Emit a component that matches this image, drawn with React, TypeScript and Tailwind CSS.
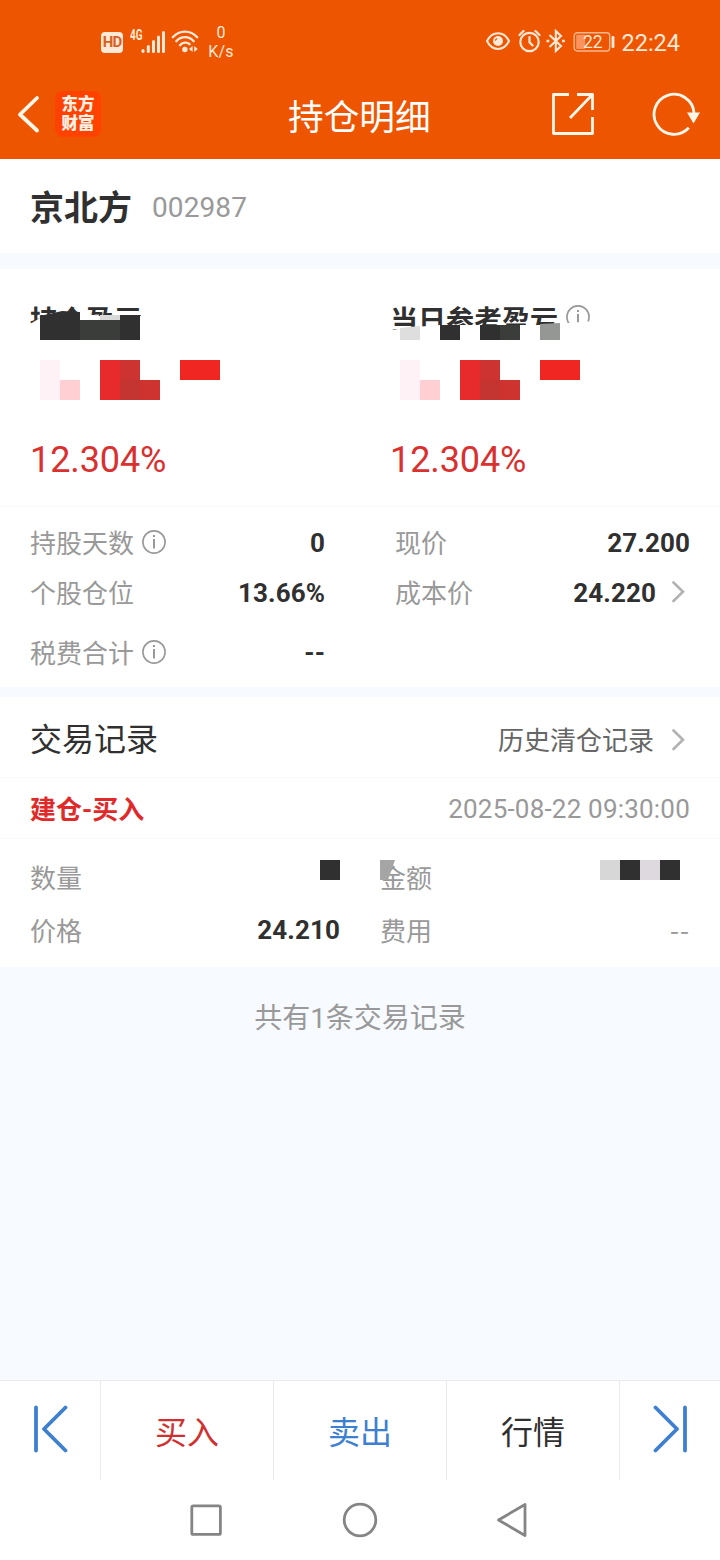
import React from 'react';
import clsx from 'clsx';

interface InfoIconProps {
  className?: string;
}

const InfoIcon: React.FC<InfoIconProps> = ({ className }) => (
  <svg viewBox="0 0 24 24" className={clsx('h-6 w-6 shrink-0', className)} fill="none" stroke="#999" strokeWidth="1.6">
    <circle cx="12" cy="12" r="11.1" />
    <path d="M12 9v9.5" strokeWidth="2" />
    <path d="M12 5v2" strokeWidth="2" />
  </svg>
);

const ChevronIcon: React.FC = () => (
  <svg viewBox="0 0 14 22" className="h-[22px] w-[14px] shrink-0" fill="none" stroke="#b3b1b3" strokeWidth="2.6" strokeLinecap="round">
    <path d="M2.5 1.5l9.5 9.2L2.5 20" />
  </svg>
);

const StatusBar: React.FC = () => (
  <div className="flex h-[70px] items-center justify-between pl-[101px] pr-10 pt-[13px] text-[#ffe9d6]">
    <div className="flex items-center">
      <div className="mt-px flex h-[21px] w-[22px] items-center justify-center rounded-[4px] bg-[#ffe9d6] text-[15px] font-bold tracking-[-0.8px] text-[#d9601f]">
        HD
      </div>
      <svg viewBox="0 0 36 28" className="ml-[7px] h-7 w-9" fill="currentColor">
        <text x="0" y="12" fontSize="14" fontWeight="700" textLength="12.5" lengthAdjust="spacingAndGlyphs">4G</text>
        <rect x="11.5" y="21" width="3" height="4" rx="1.5" />
        <rect x="16.8" y="17" width="3" height="8" rx="1.5" />
        <rect x="22" y="12" width="3" height="13" rx="1.5" />
        <rect x="27" y="7.5" width="3" height="17.5" rx="1.5" />
        <rect x="32" y="3" width="3" height="22" rx="1.5" />
      </svg>
      <svg viewBox="0 0 28 24" className="mb-px ml-[5px] h-6 w-7" fill="none" stroke="currentColor" strokeWidth="2.4" strokeLinecap="round">
        <path d="M1.8 8.2C8.5 0.7 19.5 0.7 26.2 8.2" />
        <path d="M5.3 12.2C10 6.8 18 6.8 22.7 12.2" />
        <path d="M9 16.2C11.8 13 16.2 13 18.6 15.2" />
        <circle cx="13.9" cy="20.5" r="2.7" fill="currentColor" stroke="none" />
        <path d="M18 20l3.6-3v6zM23.2 17l3.6 3-3.6 3z" fill="currentColor" stroke="none" />
      </svg>
      <div className="ml-[8px] w-[28px] text-center text-[16px] leading-[19px] tracking-[0.2px]">
        <p>0</p>
        <p>K/s</p>
      </div>
    </div>
    <div className="flex items-center">
      <svg viewBox="0 0 24 20" className="mb-px h-5 w-6" fill="none" stroke="currentColor" strokeWidth="2">
        <path d="M1 10C6 -0.5 18 -0.5 23 10C18 20.5 6 20.5 1 10z" />
        <circle cx="12" cy="10" r="5" fill="currentColor" stroke="none" />
        <path d="M11 7.6a2.6 2.6 0 0 0-1.7 2" stroke="#ee5500" strokeWidth="1.2" />
      </svg>
      <svg viewBox="0 0 24 24" className="mb-[2px] ml-[8px] h-6 w-6" fill="none" stroke="currentColor" strokeWidth="2.2" strokeLinecap="round">
        <circle cx="11.5" cy="13" r="9.2" />
        <path d="M11.5 8v5.4l3 3M1.5 6l4-4M21.5 6l-4-4" />
      </svg>
      <svg viewBox="0 0 20 24" className="mb-[2px] ml-[4px] h-6 w-5" fill="none" stroke="currentColor" strokeWidth="2.1">
        <path d="M3.5 6l11.5 11-5.2 5V2L15 7 3.5 18" />
        <path d="M0.5 12h2.8M16 12h2.8" strokeWidth="2.4" />
      </svg>
      <svg viewBox="0 0 42 20" className="ml-[7px] h-5 w-[42px]">
        <rect x="1.2" y="0.8" width="35.5" height="18.2" rx="3" fill="none" stroke="#fbb78e" strokeWidth="1.4" />
        <rect x="3.2" y="2.8" width="9" height="14.2" rx="1" fill="#f9945f" />
        <rect x="38.6" y="4" width="2.8" height="12" rx="1" fill="#ffe9d6" />
        <text x="19.8" y="16" fontSize="17.5" fill="#ffe9d6" textAnchor="middle">22</text>
      </svg>
      <span className="ml-[6px] mt-[4px] text-[23.5px] leading-none">22:24</span>
    </div>
  </div>
);

const Header: React.FC = () => (
  <header className="h-[159px] shrink-0 bg-[#ee5500]">
    <StatusBar />
    <div className="flex h-[87px] items-center px-4 text-white">
      <svg viewBox="0 0 26 38" className="h-[38px] w-[26px]" fill="none" stroke="#fff6e8" strokeWidth="3.8" strokeLinecap="round" strokeLinejoin="round">
        <path d="M21 3L4 19.5l17 16" />
      </svg>
      <div className="ml-[13px] flex h-[46px] w-[46px] flex-col items-center justify-center rounded-lg bg-[#ff4200] text-[16.5px] font-black leading-[19px] text-[#fff1e4]">
        <span>东方</span>
        <span>财富</span>
      </div>
      <h1 className="ml-[187px] mt-[10px] w-[144px] text-[35.7px] leading-none">持仓明细</h1>
      <svg viewBox="0 0 44 44" className="ml-[119px] h-11 w-11" fill="none" stroke="#fff6e8" strokeWidth="2.8" strokeLinejoin="round">
        <path d="M18 2.5H2.5v39h39V25M26 2.5h15.5V18M41 3L19 26" />
      </svg>
      <svg viewBox="0 0 50 46" className="ml-[56px] h-[46px] w-[50px] shrink-0" fill="none" stroke="#fff6e8" strokeWidth="2.8">
        <path d="M37.8 36.8A20 20 0 1 1 43 22" />
        <path d="M36 21.5h13l-6.5 11z" fill="#fff6e8" stroke="none" />
      </svg>
    </div>
  </header>
);

/* Privacy mosaic over the profit amounts */
const AmountMosaic: React.FC = () => (
  <svg viewBox="0 0 180 40" className="ml-[10px] h-10 w-[180px]">
    <rect width="20" height="40" fill="#fff2f7" />
    <rect x="20" y="20" width="20" height="20" fill="#ffcfd3" />
    <rect x="60" width="20" height="40" fill="#e72a2b" />
    <rect x="80" width="20" height="20" fill="#cd3431" />
    <rect x="80" y="20" width="20" height="20" fill="#c43431" />
    <rect x="100" y="20" width="20" height="20" fill="#cf3330" />
    <rect x="140" width="40" height="20" fill="#f02622" />
  </svg>
);

const ProfitSection: React.FC = () => (
  <section className="grid h-[238px] grid-cols-2 border-b border-[#fafafa] bg-white pl-[30px]">
    <div className="w-[330px] pt-[30px]">
      <div className="relative flex h-[40px] items-center text-[28px] font-bold text-[#303030]">
        <span className="mt-[5px]">持仓盈亏</span>
        <svg viewBox="0 0 120 46" className="absolute left-0 top-0 h-[46px] w-[120px]">
          <path d="M0 25L10 19L30 12L50 14L70 17H115V46H0z" fill="#fff" />
          <path d="M10 17L32 12L50 13V41H10z" fill="#303030" />
          <rect x="50" y="21" width="40" height="20" fill="#3b3d3a" />
          <rect x="70" y="16" width="20" height="5" fill="#d9d9d9" />
          <path d="M90 17h20v24H90z" fill="#303030" />
        </svg>
      </div>
      <div className="mt-[21px] h-10">
        <AmountMosaic />
      </div>
      <p className="mt-[42px] text-[36px] leading-[36px] tracking-[-0.1px] text-[#d93030]">12.304%</p>
    </div>
    <div className="w-[330px] pl-[15px] pt-[30px]">
      <div className="relative flex h-[40px] items-center text-[28px] font-bold text-[#303030]">
        <span className="mt-[5px]">当日参考盈亏</span>
        <InfoIcon className="mb-[4px] ml-2" />
        <svg viewBox="0 0 210 46" className="absolute left-0 top-0 h-[46px] w-[210px]">
          <path d="M0 31L25 28L50 26H150L205 22V46H0z" fill="#fff" />
          <path d="M10 29l20-2v14H10z" fill="#dedede" />
          <path d="M50 26h20v15H50zM90 26h20v15H90z" fill="#303030" />
          <rect x="110" y="26" width="20" height="15" fill="#3b3d3a" />
          <path d="M150 25l20-1v17h-20z" fill="#959794" />
        </svg>
      </div>
      <div className="mt-[21px] h-10">
        <AmountMosaic />
      </div>
      <p className="mt-[42px] text-[36px] leading-[36px] tracking-[-0.1px] text-[#d93030]">12.304%</p>
    </div>
  </section>
);

interface StatProps {
  label: string;
  value: string;
  info?: boolean;
  arrow?: boolean;
}

const Stat: React.FC<StatProps> = ({ label, value, info, arrow }) => (
  <div className="flex items-center">
    <span className="mt-[3px] text-[26px] text-[#999]">{label}</span>
    {info && <InfoIcon className="mb-[2px] ml-2" />}
    <span className={clsx('ml-auto text-[26px] font-bold tracking-[0.1px] text-[#303030]', arrow && 'mr-[15px]')}>
      {value}
    </span>
    {arrow && (
      <span className="mb-[2px] mr-[5px]">
        <ChevronIcon />
      </span>
    )}
  </div>
);

const StatsSection: React.FC = () => (
  <section className="grid h-[180px] grid-cols-[295px_295px] grid-rows-[50px_50px_70px] gap-x-[70px] bg-white pl-[30px] pt-[11px]">
    <Stat label="持股天数" value="0" info />
    <Stat label="现价" value="27.200" />
    <Stat label="个股仓位" value="13.66%" />
    <Stat label="成本价" value="24.220" arrow />
    <Stat label="税费合计" value="--" info />
  </section>
);

const RecordsSection: React.FC = () => (
  <section className="h-[270px] bg-white">
    <div className="flex h-[81px] items-center border-b border-[#fafafa] px-[30px] pt-[5px]">
      <h2 className="text-[32px] text-[#303030]">交易记录</h2>
      <span className="ml-auto mr-[17px] mt-[4px] text-[26px] text-[#666]">历史清仓记录</span>
      <span className="mr-[5px] flex">
        <ChevronIcon />
      </span>
    </div>
    <div className="flex h-[61px] items-center justify-between border-b border-[#fafafa] px-[30px] pt-[2px] text-[26px]">
      <span className="mt-[3px] font-bold text-[#e02a2a]">建仓-买入</span>
      <span className="tracking-[0.2px] text-[#999]">2025-08-22 09:30:00</span>
    </div>
    <div className="grid grid-cols-[310px_310px] grid-rows-[52px_52px] gap-x-10 px-[30px] pt-[13px] text-[26px] text-[#999]">
      <div className="flex items-center justify-between">
        <span className="mt-[3px]">数量</span>
        <span className="mb-[16px] h-5 w-5 bg-[#303030]" />
      </div>
      <div className="relative flex items-center justify-between">
        <span className="mt-[3px]">金额</span>
        <svg viewBox="0 0 16 20" className="absolute left-0 top-[8px] h-5 w-4">
          <path d="M0 0h15L8 20H0z" fill="#a5a5a5" />
        </svg>
        <div className="mb-[16px] mr-[10px] flex">
          <span className="h-5 w-5 bg-[#d7d7d7]" />
          <span className="h-5 w-5 bg-[#303030]" />
          <span className="h-5 w-5 bg-[#ddd9df]" />
          <span className="h-5 w-5 bg-[#303030]" />
        </div>
      </div>
      <div className="flex items-center justify-between">
        <span className="mt-[4px]">价格</span>
        <span className="font-bold tracking-[0.1px] text-[#303030]">24.210</span>
      </div>
      <div className="flex items-center justify-between">
        <span className="mt-[4px]">费用</span>
        <span className="mb-[3px] font-['Noto_Sans_CJK_SC'] tracking-[1px]">--</span>
      </div>
    </div>
  </section>
);

const ActionBar: React.FC = () => (
  <footer className="grid h-[100px] shrink-0 grid-cols-[100px_173px_173px_173px_101px] border-t border-[#e8ecf0] bg-white text-[32px]">
    <button className="flex items-center justify-center pb-[3px]">
      <svg viewBox="0 0 36 48" className="ml-px h-12 w-9" fill="none" stroke="#3e7fd0" strokeWidth="3.8" strokeLinecap="round" strokeLinejoin="round">
        <path d="M3 2.5v43M32.5 2.5L11 24l21.5 21.5" />
      </svg>
    </button>
    <button className="border-l border-[#ebebeb] pt-1 text-[#d03030]">买入</button>
    <button className="border-l border-[#ebebeb] pt-1 text-[#3e7fd0]">卖出</button>
    <button className="border-l border-[#ebebeb] pt-1 text-[#303030]">行情</button>
    <button className="flex items-center justify-center border-l border-[#ebebeb] pb-[3px]">
      <svg viewBox="0 0 36 48" className="h-12 w-9" fill="none" stroke="#3e7fd0" strokeWidth="3.8" strokeLinecap="round" strokeLinejoin="round">
        <path d="M33 2.5v43M3.5 2.5L25 24L3.5 45.5" />
      </svg>
    </button>
  </footer>
);

const SystemNav: React.FC = () => (
  <nav className="flex h-20 shrink-0 items-center justify-center gap-[118px] bg-white">
    <svg viewBox="0 0 36 36" className="h-9 w-9" fill="none" stroke="#858585" strokeWidth="2.8">
      <rect x="3.8" y="3.8" width="28.6" height="28.6" rx="1.5" />
    </svg>
    <svg viewBox="0 0 36 36" className="h-9 w-9" fill="none" stroke="#858585" strokeWidth="2.8">
      <circle cx="18" cy="18" r="15.8" />
    </svg>
    <svg viewBox="0 0 36 36" className="h-9 w-9" fill="none" stroke="#858585" strokeWidth="2.8" strokeLinejoin="round">
      <path d="M29 2.5v31L2.5 18z" />
    </svg>
  </nav>
);

export default function App() {
  return (
    <div className="flex h-[1560px] w-[720px] flex-col overflow-hidden bg-[#f7faff] font-[Roboto,'Noto_Sans_CJK_SC',sans-serif]">
      <Header />
      <section className="flex h-[94px] items-center bg-white px-[30px] pt-1">
        <span className="mt-px text-[34px] font-bold text-[#303030]">京北方</span>
        <span className="ml-5 text-[28px] tracking-[0.1px] text-[#999]">002987</span>
      </section>
      <main className="flex flex-1 flex-col pt-4">
        <ProfitSection />
        <StatsSection />
        <div className="h-[10px]" />
        <RecordsSection />
        <p className="mt-[31px] text-center text-[28px] text-[#999]">共有1条交易记录</p>
      </main>
      <ActionBar />
      <SystemNav />
    </div>
  );
}
